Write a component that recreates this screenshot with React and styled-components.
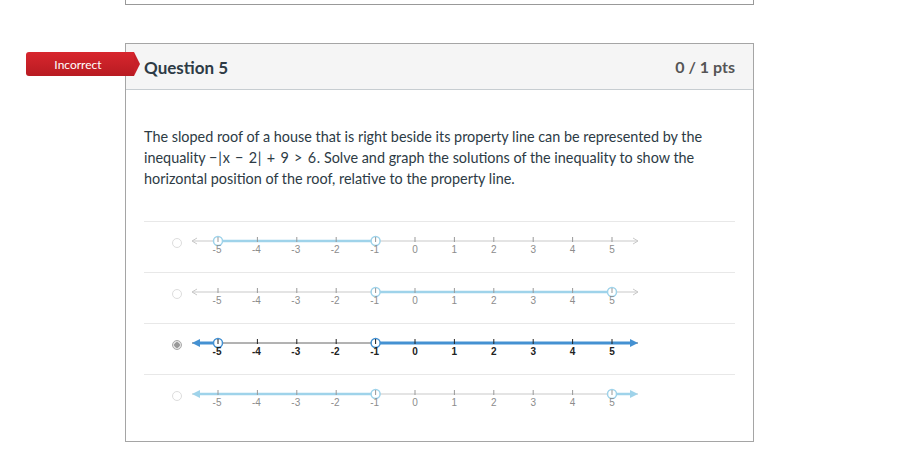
import styled, { createGlobalStyle } from "styled-components"

const GlobalStyle = createGlobalStyle`
  body {
    margin: 0;
    background: #fff;
    font-family: Lato, "Open Sans", sans-serif;
    color: #2d3b45;
  }
`

const Page = styled.div`
  width: 629px;
  margin-left: 125px;
`

const PrevCard = styled.div`
  height: 4px;
  border: 1px solid #999;
  border-top: none;
`

const Card = styled.div`
  position: relative;
  margin-top: 38px;
  border: 1px solid #a5a5a5;
`

const Badge = styled.div`
  position: absolute;
  left: -100px;
  top: 8px;
  width: 108px;
  height: 24px;
  display: flex;
  align-items: center;
  justify-content: center;
  padding-right: 4px;
  box-sizing: border-box;
  border-radius: 3px 0 0 3px;
  background: linear-gradient(#d8262e, #b81b22);
  color: #fff;
  font-size: 12px;
  &::after {
    content: "";
    position: absolute;
    right: -6px;
    top: 0;
    border-top: 12px solid transparent;
    border-bottom: 12px solid transparent;
    border-left: 6px solid #c72028;
  }
`

const Header = styled.div`
  height: 45px;
  display: flex;
  align-items: center;
  justify-content: space-between;
  padding: 0 18px;
  background: #f5f5f5;
  border-bottom: 1px solid #c7cdd1;
`

const Title = styled.h2`
  margin: 1px 0 0;
  font-size: 17px;
  font-weight: 700;
  color: #2d3b45;
`

const Points = styled.div`
  font-size: 16px;
  font-weight: 700;
  color: #555;
`

const Body = styled.div`
  padding: 36px 18px 16px;
`

const Text = styled.p`
  margin: 0;
  font-size: 14.4px;
  line-height: 21px;
  color: #2d3b45;
`

const MathExpr = styled.span`
  letter-spacing: 0.8px;
`

const Answers = styled.div`
  margin-top: 32px;
`

const Row = styled.div`
  height: 50px;
  display: flex;
  align-items: flex-start;
  border-top: 1px solid #e8e8e8;
`

const Radio = styled.span`
  width: 10px;
  height: 10px;
  margin: 16px 0 0 28px;
  box-sizing: border-box;
  border-radius: 50%;
  border: 1px solid ${(p) => (p.$selected ? "#aaa" : "#ddd")};
  background: ${(p) =>
    p.$selected ? "radial-gradient(#999 0 2.5px, #e4e4e4 3px)" : "#fff"};
`

const LineSvg = styled.svg`
  display: block;
  margin: 8px 0 0 4px;
  overflow: visible;
`

const X0 = 32
const STEP = 39.4
const LEFT = 6
const RIGHT = 452
const Y = 11
const xOf = (v) => (v === -Infinity ? LEFT : v === Infinity ? RIGHT : X0 + (v + 5) * STEP)

const answers = [
  { segs: [[-5, -1]] },
  { segs: [[-1, 5]] },
  { segs: [[-Infinity, -5], [-1, Infinity]], selected: true },
  { segs: [[-Infinity, -1], [5, Infinity]] },
]

function NumberLine({ segs, selected }) {
  const c = selected
    ? { axis: "#666", tick: "#222", label: "#222", blue: "#4491d2", w: 3, weight: 700 }
    : { axis: "#c9c9c9", tick: "#999", label: "#8c8c8c", blue: "#9fd3ea", w: 2.5, weight: 400 }
  const leftRay = segs.some((s) => s[0] === -Infinity)
  const rightRay = segs.some((s) => s[1] === Infinity)
  const ticks = Array.from({ length: 11 }, (_, i) => i - 5)
  const ends = segs.flatMap((s) => s.filter((v) => Number.isFinite(v)))
  return (
    <LineSvg width="460" height="30">
      <line x1={LEFT} y1={Y} x2={RIGHT} y2={Y} stroke={c.axis} strokeWidth="1" />
      {!leftRay && (
        <polyline points={`${LEFT + 5},${Y - 3} ${LEFT},${Y} ${LEFT + 5},${Y + 3}`} fill="none" stroke={c.axis} />
      )}
      {!rightRay && (
        <polyline points={`${RIGHT - 5},${Y - 3} ${RIGHT},${Y} ${RIGHT - 5},${Y + 3}`} fill="none" stroke={c.axis} />
      )}
      {segs.map(([a, b], i) => {
        const x1 = a === -Infinity ? LEFT + 6 : xOf(a)
        const x2 = b === Infinity ? RIGHT - 6 : xOf(b)
        return <line key={i} x1={x1} y1={Y} x2={x2} y2={Y} stroke={c.blue} strokeWidth={c.w} />
      })}
      {leftRay && <polygon points={`${LEFT},${Y} ${LEFT + 8},${Y - 4} ${LEFT + 8},${Y + 4}`} fill={c.blue} />}
      {rightRay && <polygon points={`${RIGHT},${Y} ${RIGHT - 8},${Y - 4} ${RIGHT - 8},${Y + 4}`} fill={c.blue} />}
      {ends.map((v, i) => (
        <circle key={i} cx={xOf(v)} cy={Y} r="4.5" fill="#fff" stroke={c.blue} strokeWidth="1.5" />
      ))}
      {ticks.map((v) => (
        <g key={v}>
          <line x1={xOf(v)} y1={Y - 4} x2={xOf(v)} y2={Y + 1} stroke={c.tick} strokeWidth="1" />
          <text
            x={xOf(v) + (v < 0 ? -1 : 0)}
            y={Y + 12}
            textAnchor="middle"
            fontFamily="Liberation Sans, Arial, sans-serif"
            fontSize="10"
            fontWeight={c.weight}
            fill={c.label}
          >
            {v}
          </text>
        </g>
      ))}
    </LineSvg>
  )
}

export default function App() {
  return (
    <>
      <GlobalStyle />
      <Page>
        <PrevCard />
        <Card>
          <Badge>Incorrect</Badge>
          <Header>
            <Title>Question 5</Title>
            <Points>0 / 1 pts</Points>
          </Header>
          <Body>
            <Text>
              The sloped roof of a house that is right beside its property line can be represented by the
              inequality <MathExpr>−|x − 2| + 9 &gt; 6</MathExpr>. Solve and graph the solutions of the inequality to show the
              horizontal position of the roof, relative to the property line.
            </Text>
            <Answers>
              {answers.map((a, i) => (
                <Row key={i}>
                  <Radio $selected={a.selected} />
                  <NumberLine segs={a.segs} selected={a.selected} />
                </Row>
              ))}
            </Answers>
          </Body>
        </Card>
      </Page>
    </>
  )
}
